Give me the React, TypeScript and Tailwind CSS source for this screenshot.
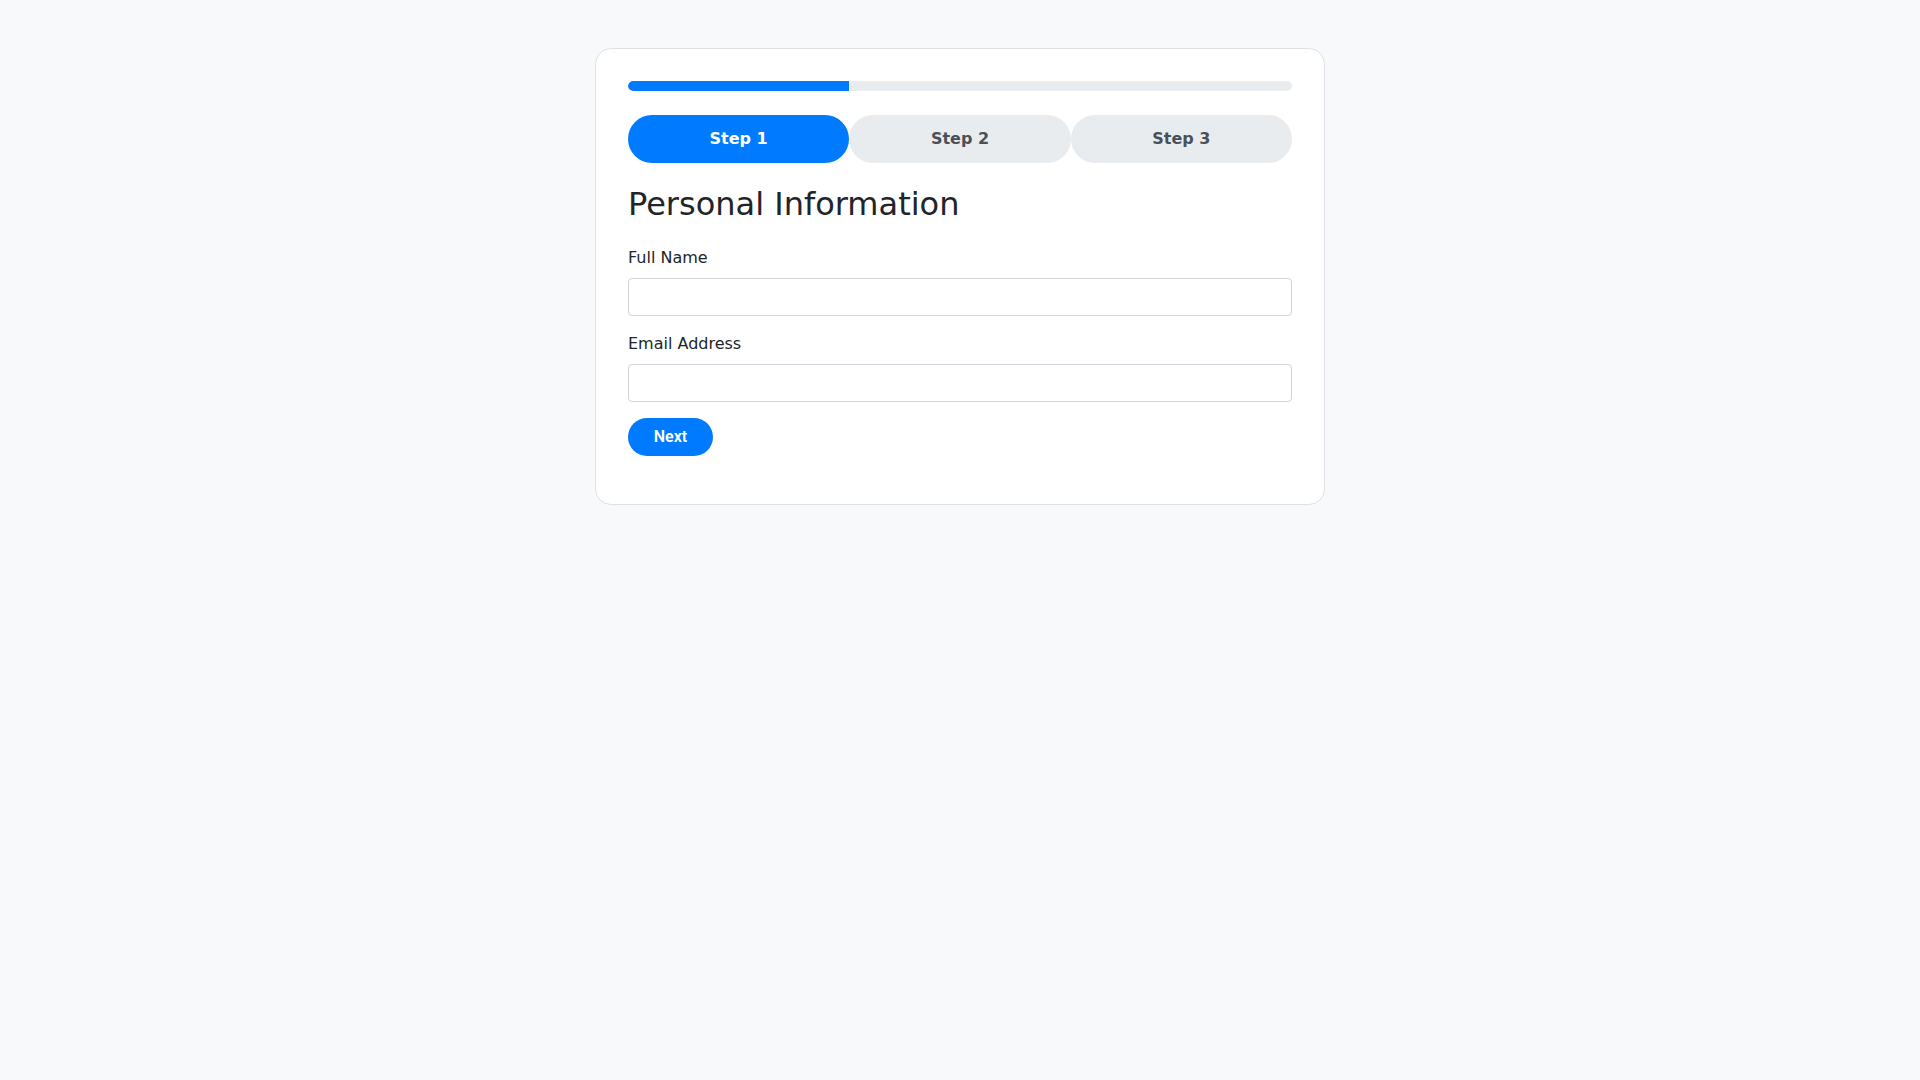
import React from "react";

export default function App() {
  const steps = ["Step 1", "Step 2", "Step 3"];
  return (
    <div
      className="min-h-screen w-full bg-[#f8f9fa] pt-[48px] text-[#212529]"
      style={{ fontFamily: '"DejaVu Sans", sans-serif' }}
    >
      <div className="mx-auto w-[730px] rounded-2xl border border-[#dee2e6] bg-white p-8">
        <div className="h-[10px] w-full overflow-hidden rounded-full bg-[#e9ecef]">
          <div className="h-full w-1/3 rounded-l-full bg-[#007bff]" />
        </div>
        <div className="mt-6 flex">
          {steps.map((s, i) => (
            <div
              key={s}
              className={
                i === 0
                  ? "flex h-[48px] flex-1 items-center justify-center rounded-full bg-[#007bff] text-[16px] font-bold leading-6 text-white"
                  : "flex h-[48px] flex-1 items-center justify-center rounded-full bg-[#e9ecef] text-[16px] font-bold leading-6 text-[#495057]"
              }
            >
              {s}
            </div>
          ))}
        </div>
        <h2 className="mt-[22px] text-[32px] font-normal leading-[38px] text-[#212529]">
          Personal Information
        </h2>
        <form className="mt-[23px]">
          <div>
            <label className="mb-2 block text-[16px] leading-6 text-[#212529]">Full Name</label>
            <input
              type="text"
              className="block h-[38px] w-full rounded border border-[#ced4da] bg-white px-3 text-[16px] outline-none"
            />
          </div>
          <div className="mt-4">
            <label className="mb-2 block text-[16px] leading-6 text-[#212529]">Email Address</label>
            <input
              type="email"
              className="block h-[38px] w-full rounded border border-[#ced4da] bg-white px-3 text-[16px] outline-none"
            />
          </div>
          <div className="mt-4 mb-4">
            <button
              type="button"
              className="h-[38px] w-[85px] rounded-full bg-[#007bff] text-[16px] font-semibold leading-6 text-white"
              style={{ fontFamily: 'Roboto, "Liberation Sans", sans-serif' }}
            >
              Next
            </button>
          </div>
        </form>
      </div>
    </div>
  );
}
